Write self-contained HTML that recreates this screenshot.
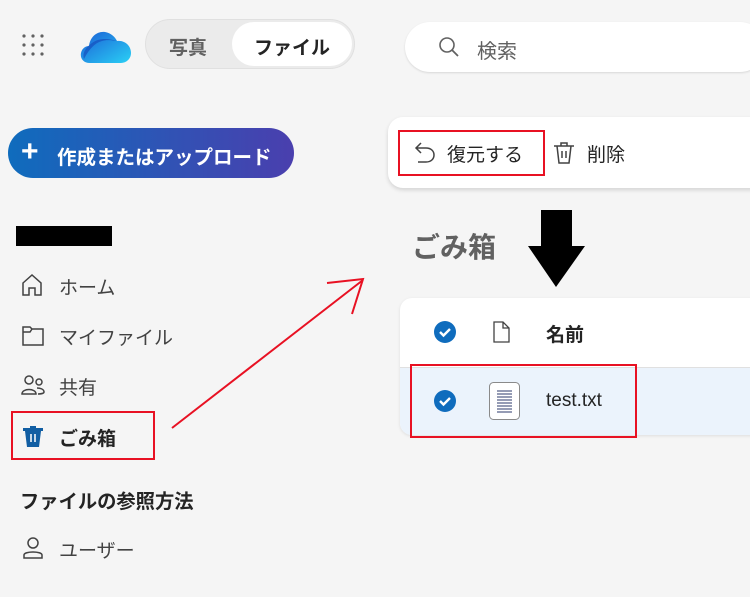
<!DOCTYPE html><html><head><meta charset="utf-8"><style>
body{margin:0;width:750px;height:597px;background:#f5f5f5;position:relative;overflow:hidden;font-family:"Liberation Sans","Noto Sans CJK JP",sans-serif;color:#242424}
.a{position:absolute}
.t{font-size:19px;color:#424242}
</style></head><body>
<svg class="a" style="left:20px;top:32px" width="26" height="26"><g fill="#616161"><circle cx="4" cy="4" r="1.6"/><circle cx="13" cy="4" r="1.6"/><circle cx="22" cy="4" r="1.6"/><circle cx="4" cy="13" r="1.6"/><circle cx="13" cy="13" r="1.6"/><circle cx="22" cy="13" r="1.6"/><circle cx="4" cy="22" r="1.6"/><circle cx="13" cy="22" r="1.6"/><circle cx="22" cy="22" r="1.6"/></g></svg>
<svg class="a" style="left:80px;top:29px" width="52" height="36" viewBox="0 0 52 36"><defs><linearGradient id="c" x1="0" y1="0" x2="1" y2="1"><stop offset="0" stop-color="#1b5fd6"/><stop offset="1" stop-color="#2ad0f5"/></linearGradient></defs><path d="M10 34C3 34 0 29 1 24C2 19 6 17 9 17C10 8 17 2 25 3C31 4 35 8 37 12C44 11 51 16 51 24C51 30 46 34 41 34Z" fill="url(#c)"/><path d="M4 30C8 22 14 14 22 12C28 10 34 12 37 12C30 10 20 8 12 14C6 18 2 24 4 30Z" fill="#1446b8" opacity=".6"/></svg>
<div class="a" style="left:145px;top:19px;width:210px;height:50px;border-radius:25px;background:#ebebeb;border:1px solid #e0e0e0;box-sizing:border-box"></div>
<div class="a" style="left:169px;top:33px;font-size:19px;font-weight:bold;color:#616161">写真</div>
<div class="a" style="left:232px;top:22px;width:120px;height:44px;border-radius:22px;background:#fff"></div>
<div class="a" style="left:254px;top:33px;font-size:19px;font-weight:bold;color:#242424">ファイル</div>
<div class="a" style="left:405px;top:22px;width:360px;height:50px;border-radius:25px;background:#fff;box-shadow:0 1px 2px rgba(0,0,0,.12)"></div>
<svg class="a" style="left:437px;top:35px" width="24" height="24"><circle cx="10" cy="10" r="7" fill="none" stroke="#616161" stroke-width="1.6"/><path d="M15 15L21 21" stroke="#616161" stroke-width="1.8"/></svg>
<div class="a" style="left:477px;top:35px;font-size:20px;color:#616161">検索</div>
<div class="a" style="left:8px;top:128px;width:286px;height:50px;border-radius:25px;background:linear-gradient(90deg,#0f6cbd,#4a3fae)"></div>
<div class="a" style="left:21px;top:136px;font-size:30px;color:#fff;font-weight:bold;line-height:32px">+</div>
<div class="a" style="left:57px;top:141px;font-size:19.5px;color:#fff;font-weight:bold">作成またはアップロード</div>
<div class="a" style="left:16px;top:226px;width:96px;height:20px;background:#000"></div>
<svg class="a" style="left:20px;top:272px" width="26" height="26" fill="none" stroke="#424242" stroke-width="1.5"><path d="M3 11L12 3L21 11V23H15V16H9V23H3Z"/></svg>
<div class="a t" style="left:59px;top:273px">ホーム</div>
<svg class="a" style="left:20px;top:322px" width="26" height="26" fill="none" stroke="#424242" stroke-width="1.5"><path d="M3 5H10L12 7H23V23H3Z M3 10H10L12 7"/></svg>
<div class="a t" style="left:59px;top:323px">マイファイル</div>
<svg class="a" style="left:20px;top:372px" width="26" height="26" fill="none" stroke="#424242" stroke-width="1.5"><circle cx="9" cy="8" r="4"/><path d="M2 22C2 16 16 16 16 22Z"/><circle cx="19" cy="10" r="3"/><path d="M17 16C20 16 24 17 24 20C24 21 22 22 18 22"/></svg>
<div class="a t" style="left:59px;top:373px">共有</div>
<svg class="a" style="left:20px;top:423px" width="26" height="26"><path d="M3 5H23V8H21L19 24H7L5 8H3Z M10 3H16V5H10Z" fill="#115ea3"/><path d="M11 11V19M15 11V19" stroke="#fff" stroke-width="1.5"/></svg>
<div class="a" style="left:59px;top:424px;font-size:19px;font-weight:bold">ごみ箱</div>
<div class="a" style="left:11px;top:411px;width:144px;height:49px;border:2px solid #e81123;box-sizing:border-box"></div>
<div class="a" style="left:20px;top:486px;font-size:19.3px;font-weight:bold">ファイルの参照方法</div>
<svg class="a" style="left:20px;top:535px" width="26" height="26" fill="none" stroke="#424242" stroke-width="1.5"><circle cx="13" cy="8" r="5"/><path d="M4 23V20C4 16 22 16 22 20V23Z"/></svg>
<div class="a t" style="left:59px;top:536px">ユーザー</div>
<svg class="a" style="left:0;top:0" width="750" height="597"><path d="M172 428L363 280M327 283L363 279L352 314" stroke="#e81123" stroke-width="2" fill="none"/><path d="M541 210H572V246H585L556 287L528 246H541Z" fill="#000"/></svg>
<div class="a" style="left:388px;top:117px;width:380px;height:71px;border-radius:15px;background:#fff;box-shadow:0 2px 4px rgba(0,0,0,.14)"></div>
<svg class="a" style="left:412px;top:140px" width="26" height="26" fill="none" stroke="#424242" stroke-width="1.5"><path d="M9 3L4 8L9 13M4 8H14C19 8 22 11 22 15C22 19 19 22 14 22H6"/></svg>
<div class="a t" style="left:447px;top:140px;color:#242424">復元する</div>
<div class="a" style="left:398px;top:130px;width:147px;height:46px;border:2px solid #e81123;box-sizing:border-box"></div>
<svg class="a" style="left:552px;top:140px" width="26" height="26" fill="none" stroke="#424242" stroke-width="1.5"><path d="M2 6H22M9 6V3H15V6M5 6L7 23H17L19 6M10 11V18M14 11V18"/></svg>
<div class="a t" style="left:587px;top:140px;color:#242424">削除</div>
<div class="a" style="left:412px;top:226px;font-size:28px;font-weight:bold;color:#616161">ごみ箱</div>
<div class="a" style="left:400px;top:298px;width:370px;height:137px;border-radius:12px;background:#fff;box-shadow:0 1px 3px rgba(0,0,0,.1);overflow:hidden"><div style="position:absolute;left:0;top:69px;width:100%;height:68px;background:#ebf3fc;border-top:1px solid #e0e0e0"></div></div>
<svg class="a" style="left:433px;top:320px" width="24" height="24"><circle cx="12" cy="12" r="11" fill="#0f6cbd"/><path d="M7 12L10.5 15.5L17 9" stroke="#fff" stroke-width="2.4" fill="none"/></svg>
<svg class="a" style="left:433px;top:389px" width="24" height="24"><circle cx="12" cy="12" r="11" fill="#0f6cbd"/><path d="M7 12L10.5 15.5L17 9" stroke="#fff" stroke-width="2.4" fill="none"/></svg>
<svg class="a" style="left:490px;top:320px" width="22" height="24" fill="none" stroke="#424242" stroke-width="1.3"><path d="M4 2H13L19 8V22H4Z M13 2V8H19"/></svg>
<div class="a" style="left:546px;top:320px;font-size:19px;font-weight:bold">名前</div>
<svg class="a" style="left:488px;top:381px" width="34" height="40"><rect x="1.5" y="1.5" width="30" height="37" rx="4" fill="#fff" stroke="#8a8a8a"/><g stroke="#2b3a6b" stroke-width="1"><path d="M9 10H24M9 13H24M9 16H24M9 19H24M9 22H24M9 25H24M9 28H24M9 31H24"/></g></svg>
<div class="a" style="left:546px;top:390px;font-size:19px">test.txt</div>
<div class="a" style="left:410px;top:364px;width:227px;height:74px;border:2px solid #e81123;box-sizing:border-box"></div>
</body></html>
